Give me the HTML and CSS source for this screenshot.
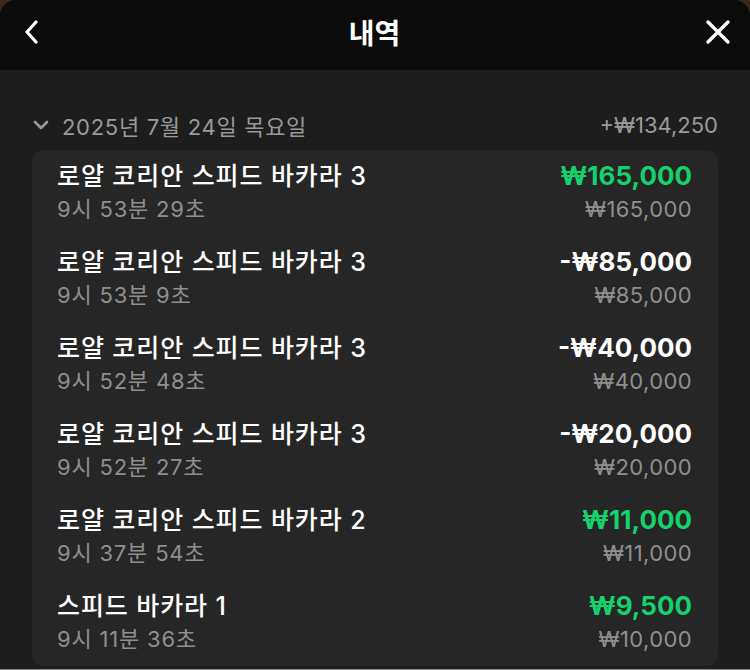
FILE: index.html
```html
<!DOCTYPE html>
<html>
<head>
    <title>내역</title>
    <link rel="stylesheet" href="styles.css">
</head>
<body>
    <div class="modal">
        <div class="header">
            <button class="icon-btn">
                <svg width="16" height="24" viewBox="0 0 16 24"><path d="M12 2 L3 12 L12 22" fill="none" stroke="#fff" stroke-width="3.2" stroke-linecap="round" stroke-linejoin="round"/></svg>
            </button>
            <h1>내역</h1>
            <button class="icon-btn">
                <svg width="26" height="26" viewBox="0 0 26 26"><path d="M3 3 L23 23 M23 3 L3 23" fill="none" stroke="#fff" stroke-width="3.4" stroke-linecap="round"/></svg>
            </button>
        </div>
        <div class="content">
            <div class="day-row">
                <div class="day-label">
                    <svg width="16" height="10" viewBox="0 0 16 10"><path d="M2 2 L8 8 L14 2" fill="none" stroke="#9a9a9a" stroke-width="2.6" stroke-linecap="round" stroke-linejoin="round"/></svg>
                    <span class="day-text">2025년 7월 24일 목요일</span>
                </div>
                <div class="day-total">+₩134,250</div>
            </div>
            <div class="card">
                <div class="tx">
                    <div class="tx-left">
                        <div class="tx-title">로얄 코리안 스피드 바카라 3</div>
                        <div class="tx-time">9시 53분 29초</div>
                    </div>
                    <div class="tx-right">
                        <div class="tx-amount win">₩165,000</div>
                        <div class="tx-bet">₩165,000</div>
                    </div>
                </div>
                <div class="tx">
                    <div class="tx-left">
                        <div class="tx-title">로얄 코리안 스피드 바카라 3</div>
                        <div class="tx-time">9시 53분 9초</div>
                    </div>
                    <div class="tx-right">
                        <div class="tx-amount">-₩85,000</div>
                        <div class="tx-bet">₩85,000</div>
                    </div>
                </div>
                <div class="tx">
                    <div class="tx-left">
                        <div class="tx-title">로얄 코리안 스피드 바카라 3</div>
                        <div class="tx-time">9시 52분 48초</div>
                    </div>
                    <div class="tx-right">
                        <div class="tx-amount">-₩40,000</div>
                        <div class="tx-bet">₩40,000</div>
                    </div>
                </div>
                <div class="tx">
                    <div class="tx-left">
                        <div class="tx-title">로얄 코리안 스피드 바카라 3</div>
                        <div class="tx-time">9시 52분 27초</div>
                    </div>
                    <div class="tx-right">
                        <div class="tx-amount">-₩20,000</div>
                        <div class="tx-bet">₩20,000</div>
                    </div>
                </div>
                <div class="tx">
                    <div class="tx-left">
                        <div class="tx-title">로얄 코리안 스피드 바카라 2</div>
                        <div class="tx-time">9시 37분 54초</div>
                    </div>
                    <div class="tx-right">
                        <div class="tx-amount win">₩11,000</div>
                        <div class="tx-bet">₩11,000</div>
                    </div>
                </div>
                <div class="tx">
                    <div class="tx-left">
                        <div class="tx-title">스피드 바카라 1</div>
                        <div class="tx-time">9시 11분 36초</div>
                    </div>
                    <div class="tx-right">
                        <div class="tx-amount win">₩9,500</div>
                        <div class="tx-bet">₩10,000</div>
                    </div>
                </div>
            </div>
        </div>
    </div>
</body>
</html>
```

FILE: styles.css
```css
body {
    margin: 0;
    background: #3a2818;
    font-family: Inter, "Noto Sans CJK KR", sans-serif;
    overflow: hidden;
}
.modal {
    height: 670px;
    box-sizing: border-box;
    background: #1d1d1d;
    border-radius: 16px 16px 0 0;
    border-bottom: 1px solid #8a8a8a;
    overflow: hidden;
}
.header {
    height: 70px;
    background: #0b0b0b;
    display: flex;
    align-items: center;
    justify-content: space-between;
    padding: 0 15px 6px 20px;
    box-sizing: border-box;
}
.header h1 {
    margin: 0 0 0 4px;
    color: white;
    font-size: 28px;
    font-weight: 700;
    font-family: "Noto Sans CJK KR", sans-serif;
}
.icon-btn {
    background: none;
    border: none;
    padding: 4px;
    display: flex;
    cursor: pointer;
}
.content {
    padding: 40px 32px 0 32px;
}
.day-row {
    display: flex;
    justify-content: space-between;
    align-items: center;
    color: #9a9a9a;
    font-size: 22px;
    height: 30px;
    margin-bottom: 10px;
}
.day-label {
    display: flex;
    align-items: center;
    gap: 13px;
    padding-left: 1px;
}
.day-text {
    letter-spacing: 0.7px;
}
.card {
    background: #262626;
    border-radius: 12px;
    padding: 0 26px 0 25px;
}
.tx {
    display: flex;
    justify-content: space-between;
    padding: 10px 0;
    height: 66px;
}
.tx-title {
    color: white;
    font-size: 25px;
    font-weight: 500;
    letter-spacing: 0.9px;
    line-height: 32px;
}
.tx-time {
    color: #8f8f8f;
    font-size: 22px;
    letter-spacing: 0.8px;
    line-height: 34px;
}
.tx-bet {
    color: #8f8f8f;
    font-size: 22px;
    letter-spacing: 0.4px;
    line-height: 34px;
}
.tx-right {
    text-align: right;
}
.tx-amount {
    color: white;
    font-size: 26px;
    font-weight: 700;
    line-height: 32px;
}
.tx-amount.win {
    color: #17d16c;
}
```
